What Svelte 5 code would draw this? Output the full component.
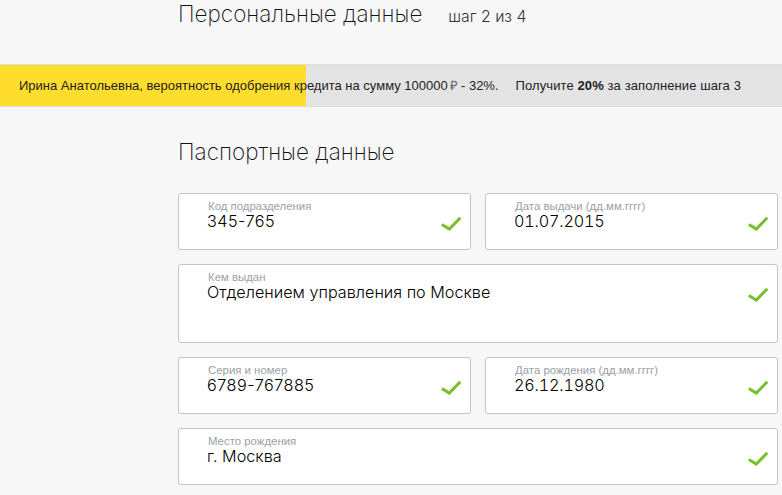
<script>
    const passport = [
        { label: 'Код подразделения', value: '345-765', kind: 'code' },
        { label: 'Дата выдачи (дд.мм.гггг)', value: '01.07.2015', kind: 'date' },
        { label: 'Кем выдан', value: 'Отделением управления по Москве', wide: true, tall: true },
        { label: 'Серия и номер', value: '6789-767885', kind: 'code' },
        { label: 'Дата рождения (дд.мм.гггг)', value: '26.12.1980', kind: 'date' },
        { label: 'Место рождения', value: 'г. Москва', wide: true }
    ];
</script>

<div class="page">
    <header class="top">
        <h1>Персональные данные</h1>
        <span class="step">шаг 2 из 4</span>
    </header>

    <div class="progress">
        <div class="fill"></div>
        <p class="note">
            <span>Ирина Анатольевна, вероятность одобрения кредита на сумму 100000 <i class="rub">₽</i> - 32%.</span>
            <span class="bonus">Получите <b>20%</b> за заполнение шага 3</span>
        </p>
    </div>

    <section class="content">
        <h2>Паспортные данные</h2>
        <div class="fields">
            {#each passport as field}
                <div class="field" class:wide={field.wide} class:tall={field.tall}>
                    <span class="label">{field.label}</span>
                    <span class="value {field.kind ?? ''}">{field.value}</span>
                    <svg class="check" width="22" height="17" viewBox="0 0 22 17">
                        <path d="M1.8 9.5 L9.3 14 L20.3 2.8" fill="none" stroke="#76c02c" stroke-width="3" />
                    </svg>
                </div>
            {/each}
        </div>
    </section>
</div>

<style>
    :global(body) {
        background: #f7f7f7;
        font-family: "Liberation Sans", Arial, sans-serif;
        color: #111;
    }
    .page {
        height: 495px;
        overflow: hidden;
    }
    .top {
        display: flex;
        align-items: baseline;
        height: 64px;
        box-sizing: border-box;
        padding: 0 0 0 178px;
    }
    h1, h2 {
        margin: 0;
        font-family: Inter, "Liberation Sans", sans-serif;
        font-weight: 200;
        font-size: 22.5px;
        line-height: 28px;
        color: #111;
    }
    .step {
        margin-left: 26px;
        font-family: Inter, "Liberation Sans", sans-serif;
        font-weight: 300;
        font-size: 15.8px;
        color: #333;
    }
    .progress {
        position: relative;
        height: 43px;
        box-sizing: border-box;
        background: #e3e3e3;
        border-top: 1px solid #deded6;
        border-bottom: 1px solid #deded6;
    }
    .fill {
        position: absolute;
        left: 0;
        top: 0;
        bottom: 0;
        width: 306px;
        background: #ffdd2d;
    }
    .note {
        position: relative;
        display: flex;
        gap: 17px;
        margin: 0;
        padding-left: 19px;
        font-size: 13px;
        line-height: 41px;
        color: #222;
    }
    .bonus {
        letter-spacing: 0.1px;
    }
    .rub {
        margin: 0 -1px 0 -1px;
        font-style: normal;
        color: #666;
    }
    .content {
        padding: 31px 4px 0 178px;
    }
    h2 {
        margin-bottom: 27px;
    }
    .fields {
        display: grid;
        grid-template-columns: 293px 293px;
        gap: 14px;
    }
    .field {
        position: relative;
        box-sizing: border-box;
        height: 57px;
        padding: 7px 28px;
        background: #fff;
        border: 1px solid #c4c4c4;
        border-radius: 3px;
    }
    .field.wide {
        grid-column: span 2;
    }
    .field.tall {
        height: 79px;
    }
    .label {
        display: block;
        margin-left: 1px;
        font-size: 11.4px;
        line-height: 11px;
        color: #9aa0a6;
    }
    .value {
        display: block;
        font-family: Inter, "Liberation Sans", sans-serif;
        font-weight: 300;
        font-size: 16.2px;
        line-height: 19px;
        color: #000;
    }
    .value.code {
        letter-spacing: 0.5px;
    }
    .value.date {
        font-variant-numeric: tabular-nums;
        letter-spacing: -0.2px;
    }
    .check {
        position: absolute;
        right: 8px;
        top: 21px;
    }
</style>
